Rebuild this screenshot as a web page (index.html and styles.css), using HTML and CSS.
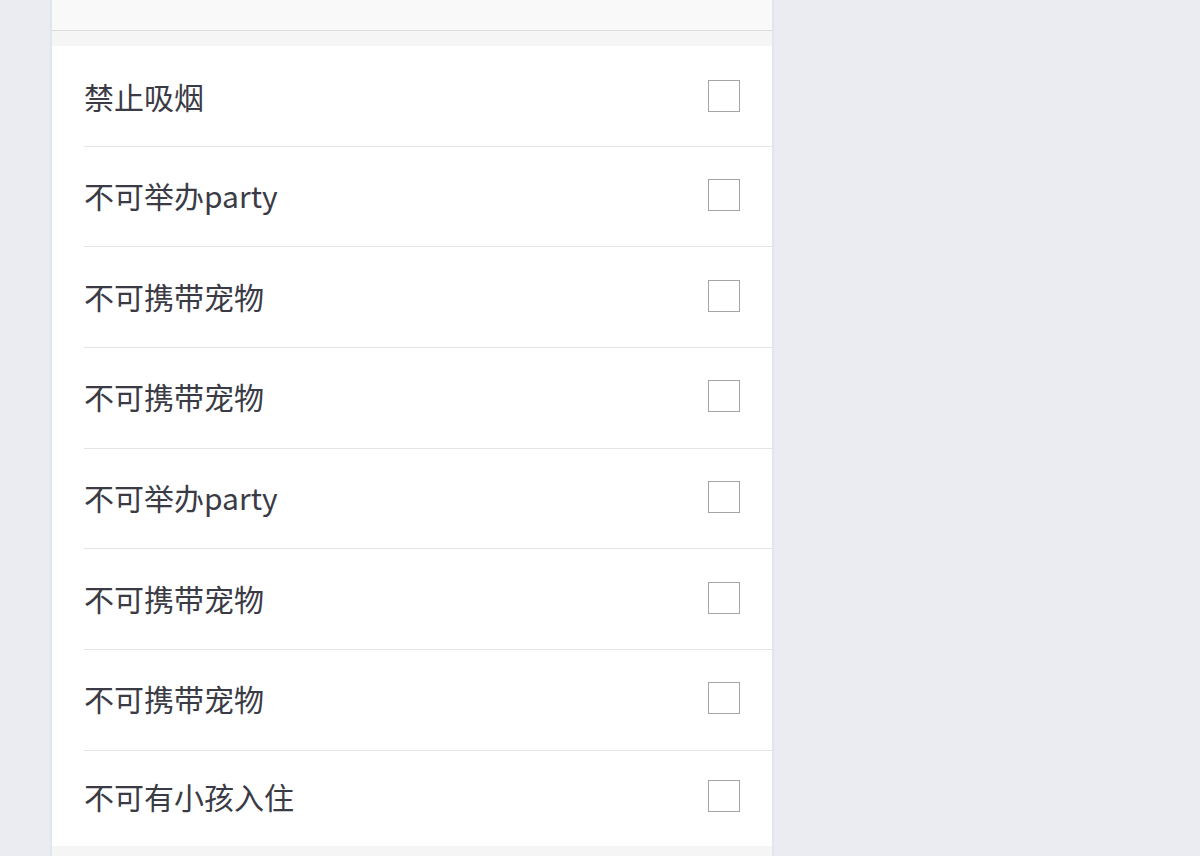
FILE: index.html
```html
<!DOCTYPE html>
<html lang="zh-CN">
<head>
<meta charset="utf-8">
<link rel="stylesheet" href="styles.css">
</head>
<body>
<div class="page">
  <div class="panel">
    <div class="header"></div>
    <div class="gap"></div>
    <ul class="list">
      <li class="row first"><span class="label">禁止吸烟</span><span class="check"></span></li>
      <li class="row"><span class="label">不可举办party</span><span class="check"></span></li>
      <li class="row"><span class="label">不可携带宠物</span><span class="check"></span></li>
      <li class="row"><span class="label">不可携带宠物</span><span class="check"></span></li>
      <li class="row"><span class="label">不可举办party</span><span class="check"></span></li>
      <li class="row"><span class="label">不可携带宠物</span><span class="check"></span></li>
      <li class="row"><span class="label">不可携带宠物</span><span class="check"></span></li>
      <li class="row last"><span class="label">不可有小孩入住</span><span class="check"></span></li>
    </ul>
    <div class="gap bottom"></div>
  </div>
</div>
</body>
</html>
```

FILE: styles.css
```css
html, body {
  margin: 0;
  padding: 0;
  height: 100%;
  overflow: hidden;
}
body {
  background: #ebecf1;
  font-family: "Noto Sans CJK SC", "Noto Sans", sans-serif;
}
.page {
  padding-left: 50px;
}
.panel {
  width: 720px;
  border-left: 2px solid #e1e5ee;
  border-right: 2px solid #e1e5ee;
  background: #ffffff;
  min-height: 900px;
}
.header {
  height: 30px;
  background: #f9f9f9;
  border-bottom: 1px solid #dcdcdf;
}
.gap {
  height: 15px;
  background: #f5f5f6;
}
.gap.bottom {
  height: 40px;
}
.list {
  list-style: none;
  margin: 0;
  padding: 0 0 0 32px;
}
.row {
  box-sizing: border-box;
  height: 100.667px;
  display: flex;
  align-items: center;
  justify-content: space-between;
  padding: 0 32px 3px 0;
  border-bottom: 1px solid #e3e3e8;
}
.row.first {
  height: 100.667px;
  padding: 0 32px 0 0;
}
.row.last {
  height: 95px;
  padding-bottom: 4px;
  border-bottom: none;
}
.label {
  font-size: 30px;
  color: #3b3b46;
  line-height: 1;
}
.check {
  box-sizing: border-box;
  width: 32px;
  height: 32px;
  border: 1px solid #a3a3a8;
  background: #fff;
}
```
